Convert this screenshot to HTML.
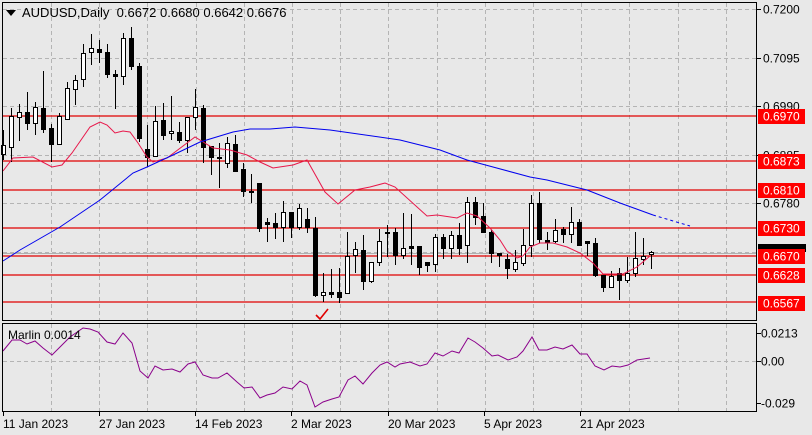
<!DOCTYPE html>
<html><head><meta charset="utf-8"><style>
html,body{margin:0;padding:0;background:#e8e8e8;}
body{width:812px;height:435px;overflow:hidden;position:relative;font-family:"Liberation Sans",sans-serif;}
svg{position:absolute;left:0;top:0;}
</style></head><body>
<svg id="s" width="812" height="435" xmlns="http://www.w3.org/2000/svg" font-family="Liberation Sans, sans-serif">
<rect width="812" height="435" fill="#e8e8e8"/>
<g id="grid" stroke="#b4b4b4" stroke-dasharray="4,3" stroke-width="1"></g>
<g id="lines"></g>
<g id="candles"></g>
<g id="ma"></g>
<rect x="2.5" y="2.5" width="754" height="318" fill="none" stroke="#000"/>
<rect x="2.5" y="323.5" width="754" height="88" fill="none" stroke="#000"/>
<path d="M6 10 L16 10 L11 16 Z" fill="#000"/>
<text x="22" y="17" font-size="13">AUDUSD,Daily&#160;&#160;0.6672 0.6680 0.6642 0.6676</text>
<text x="8" y="339" font-size="12">Marlin 0.0014</text>
<path d="M316 315 L320 319 L328 309" stroke="#e00000" stroke-width="1.6" fill="none"/>
<g id="axis" font-size="12"></g>
</svg>
<script>
var NS="http://www.w3.org/2000/svg";
function el(p,t,a,txt){var e=document.createElementNS(NS,t);for(var k in a)e.setAttribute(k,a[k]);if(txt!=null)e.textContent=txt;document.getElementById(p).appendChild(e);return e;}
// vertical grid
for(var x=51;x<756;x+=48.2){var xx=Math.round(x)+0.5;el("grid","line",{x1:xx,y1:3,x2:xx,y2:320});el("grid","line",{x1:xx,y1:324,x2:xx,y2:411});}
[9,58,106,155,203,252].forEach(function(y){el("grid","line",{x1:3,y1:y+0.5,x2:756,y2:y+0.5});});
el("grid","line",{x1:3,y1:361.5,x2:756,y2:361.5});
// current price line
el("lines","line",{x1:3,y1:253.5,x2:756,y2:253.5,stroke:"#b0b0b0","stroke-width":1});
[116,161,190,228,256,275,302].forEach(function(y){el("lines","line",{x1:3,y1:y,x2:756,y2:y,stroke:"#e00000","stroke-width":1.3});});
// candles [x,bt,bb,wt,wb,white]
var C=[[3,145,154,130,160,1],[11,116,147,108,162,1],[19,112,117,104,141,1],[27,112,123,92,130,0],[35,107,123,102,135,1],[43,108,129,71,133,0],[51,128,144,124,162,0],[59,116,144,113,145,1],[67,88,119,82,120,1],[75,80,89,75,105,1],[83,53,79,44,87,1],[91,48,52,34,65,1],[99,49,52,40,63,0],[107,52,74,44,78,0],[115,74,76,70,109,0],[123,38,76,33,85,1],[131,38,66,27,70,0],[139,66,138,63,142,0],[147,149,157,125,167,0],[155,121,156,106,157,1],[163,120,135,103,140,0],[171,131,133,96,140,1],[179,132,140,122,143,0],[187,117,140,117,153,1],[195,107,117,89,130,1],[203,108,147,105,163,0],[211,146,157,146,175,0],[219,157,158,143,188,0],[227,143,163,137,168,1],[235,144,171,135,172,0],[243,169,191,163,197,0],[251,191,192,174,203,1],[259,183,228,183,232,0],[267,222,224,218,242,0],[275,223,227,213,239,0],[283,212,227,201,242,1],[291,212,227,212,238,0],[299,208,227,204,230,1],[307,219,227,208,233,0],[315,228,295,217,297,0],[323,292,295,273,302,1],[331,292,294,269,298,0],[339,292,297,268,303,0],[347,256,293,232,293,1],[355,249,255,242,273,1],[363,250,281,235,290,0],[371,262,281,262,283,1],[379,241,262,229,266,1],[387,232,233,225,257,0],[395,232,255,228,265,0],[403,248,255,213,259,1],[411,246,248,214,265,0],[419,246,267,246,275,0],[427,262,265,262,272,0],[435,237,264,234,272,1],[443,237,248,234,259,0],[451,235,248,231,259,1],[459,235,248,223,255,0],[467,202,245,197,263,1],[475,202,217,197,225,0],[483,216,232,203,233,0],[491,232,253,230,263,0],[499,253,255,253,267,0],[507,259,268,254,279,0],[515,262,269,250,272,1],[523,245,263,229,266,1],[531,203,245,195,257,1],[539,203,239,192,243,0],[547,240,242,232,250,0],[555,230,241,219,243,1],[563,229,234,227,243,0],[571,222,234,207,243,1],[579,222,245,219,245,0],[587,241,243,241,256,0],[595,243,275,238,277,0],[603,275,287,275,292,0],[611,276,287,271,288,1],[619,273,280,268,300,0],[627,273,280,257,283,1],[635,258,273,232,277,1],[643,256,259,238,265,1],[651,252,254,251,269,1]];
C.forEach(function(c){var x=c[0];el("candles","line",{x1:x+0.5,y1:c[3],x2:x+0.5,y2:c[4],stroke:"#000","stroke-width":1});
var h=Math.max(c[2]-c[1],1);el("candles","rect",{x:x-1.5,y:c[1]+0.5,width:4,height:h,fill:c[5]?"#fff":"#000",stroke:"#000","stroke-width":1});});
function pl(pts,col,extra){var a={points:pts.map(function(p){return p.join(",")}).join(" "),fill:"none",stroke:col,"stroke-width":1};for(var k in extra)a[k]=extra[k];el("ma","polyline",a);}
pl([[3,171],[13,158],[33,157],[52,167],[62,165],[72,153],[90,127],[100,122],[107,125],[115,133],[123,131],[130,132],[138,143],[147,157],[153,162],[167,158],[187,143],[195,137],[213,148],[230,150],[247,155],[260,162],[273,168],[293,165],[307,160],[325,192],[338,204],[355,190],[370,187],[385,183],[395,187],[427,216],[437,215],[457,218],[467,213],[477,216],[490,228],[500,240],[507,251],[517,258],[523,256],[530,247],[540,243],[553,243],[567,247],[580,253],[593,263],[603,274],[623,274],[637,267],[650,256]],"#e8174a");
pl([[3,261],[20,250],[60,227],[100,200],[133,173],[147,167],[173,155],[200,142],[233,132],[250,129],[270,129],[295,127],[330,130],[400,140],[440,150],[467,160],[493,167],[530,177],[547,180],[587,190],[620,203],[653,215]],"#0000ee");
pl([[653,215],[690,226]],"#0000ee",{"stroke-dasharray":"3,3"});
pl([[3,351],[12,340],[20,340],[27,344],[35,341],[43,348],[52,355],[60,347],[70,337],[83,328],[90,329],[98,332],[107,342],[115,344],[123,333],[132,343],[140,371],[148,378],[155,366],[163,370],[172,369],[180,372],[188,364],[195,362],[203,375],[212,378],[218,378],[227,373],[237,382],[244,388],[252,387],[260,398],[267,395],[275,393],[283,387],[292,389],[300,381],[307,385],[315,407],[323,402],[332,399],[339,397],[348,380],[355,376],[363,384],[372,373],[380,365],[387,362],[395,367],[400,364],[410,362],[420,366],[427,364],[435,353],[443,356],[452,351],[459,353],[468,338],[475,342],[483,348],[492,356],[498,355],[508,360],[517,357],[523,351],[532,337],[539,350],[547,350],[555,347],[563,349],[572,345],[580,354],[587,354],[595,366],[604,370],[612,366],[620,367],[628,365],[637,360],[650,358]],"#8b008b");
// axis
[["0.7200",9],["0.7095",58],["0.6990",106],["0.6885",155],["0.6780",203]].forEach(function(a){el("axis","line",{x1:757,y1:a[1]+0.5,x2:761,y2:a[1]+0.5,stroke:"#000"});el("axis","text",{x:763,y:a[1]+4.5},a[0]);});
el("axis","rect",{x:758,y:244,width:48,height:8,fill:"#000"});
[["0.6970",116],["0.6873",161],["0.6810",190],["0.6730",228],["0.6670",256],["0.6628",275],["0.6567",303]].forEach(function(a){el("axis","rect",{x:758,y:a[1]-7,width:47,height:15,fill:"#ff0000"});el("axis","text",{x:763,y:a[1]+4.5,fill:"#fff"},a[0]);});
[["0.0213",333],["0.00",361],["-0.029",403]].forEach(function(a){el("axis","line",{x1:757,y1:a[1]+0.5,x2:761,y2:a[1]+0.5,stroke:"#000"});el("axis","text",{x:761,y:a[1]+4.5},a[0]);});
[["11 Jan 2023",3],["27 Jan 2023",99],["14 Feb 2023",195],["2 Mar 2023",291],["20 Mar 2023",388],["5 Apr 2023",484],["21 Apr 2023",580]].forEach(function(a){el("axis","line",{x1:a[1]+0.5,y1:411,x2:a[1]+0.5,y2:416,stroke:"#000"});el("axis","text",{x:a[1],y:428},a[0]);});
</script>
</body></html>
